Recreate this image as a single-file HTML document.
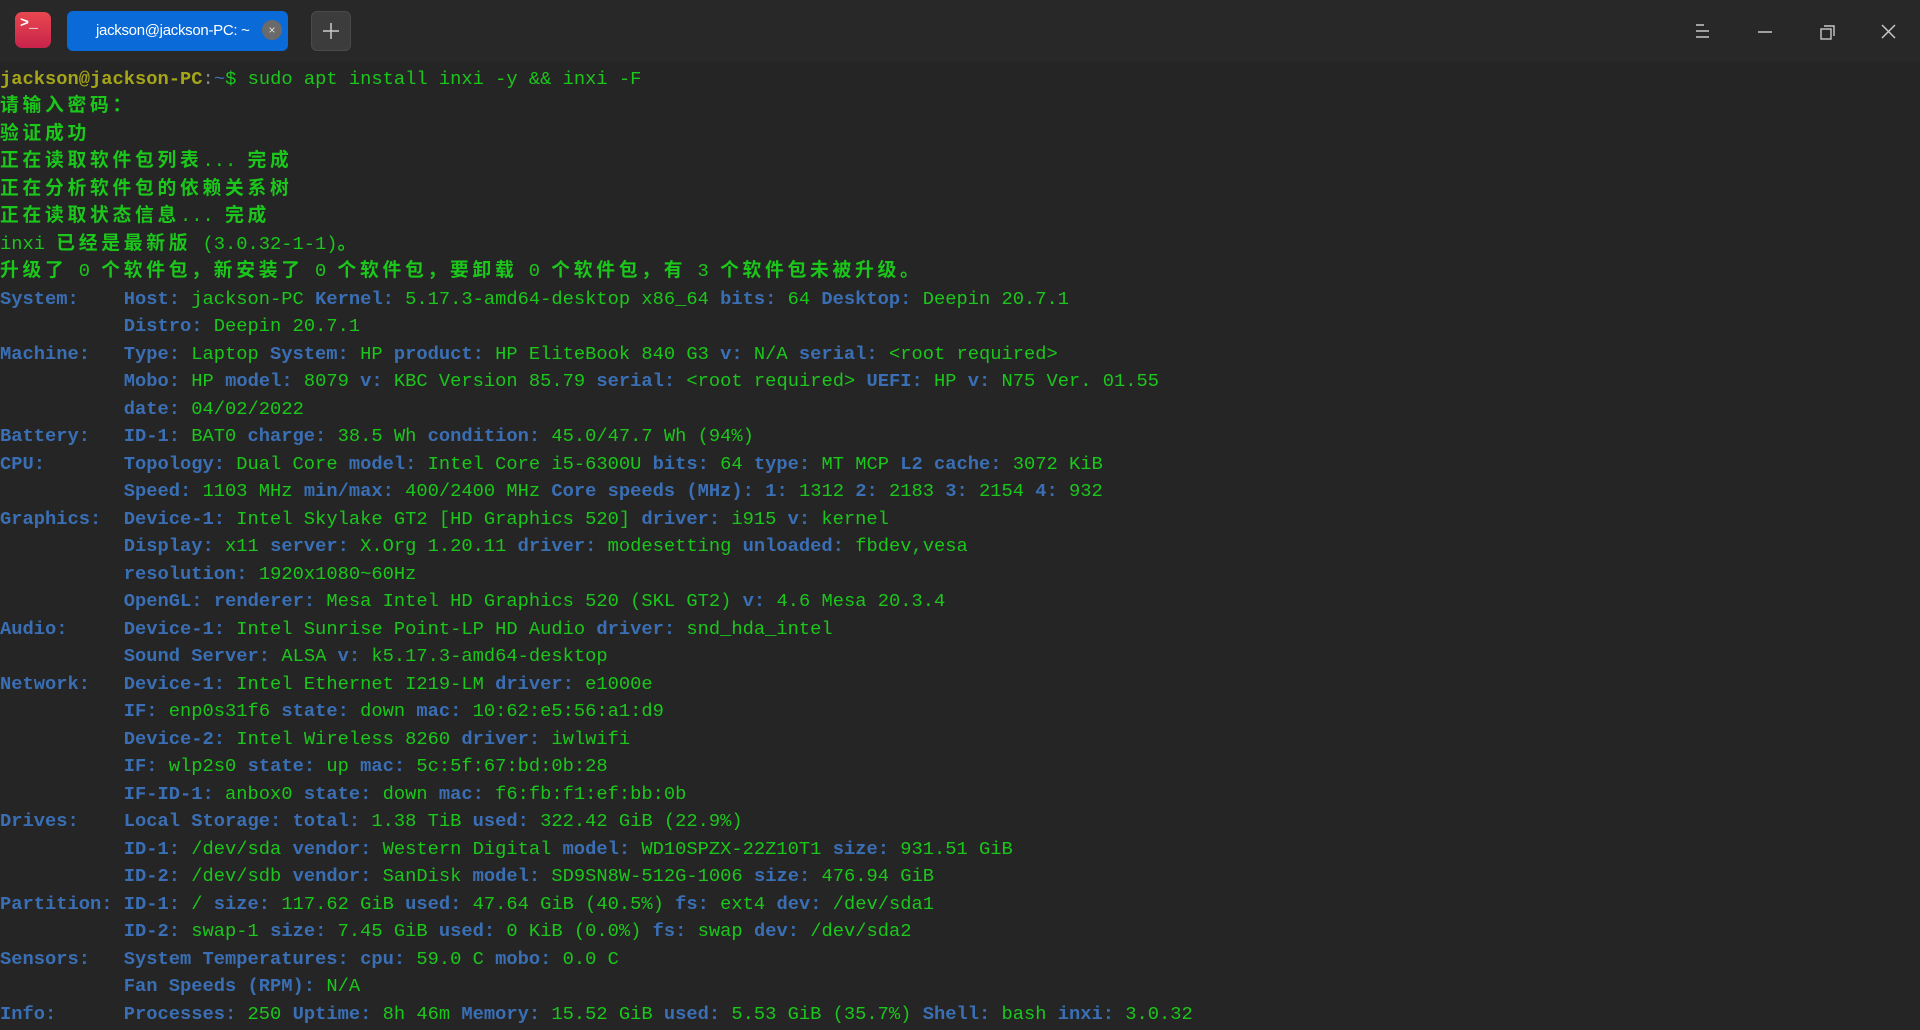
<!DOCTYPE html>
<html><head><meta charset="utf-8"><style>
html,body{margin:0;padding:0;background:#252525;width:1920px;height:1030px;overflow:hidden}
#tb{position:absolute;left:0;top:0;width:1920px;height:62px;background:#282828}
#icon{position:absolute;left:15px;top:12px;width:36px;height:36px;border-radius:7px;background:linear-gradient(#e8484e,#c8234c)}
#icon span{position:absolute;left:5px;top:3px;color:#fff;font:bold 15px "Liberation Mono",monospace}
#tab{position:absolute;left:67px;top:11px;width:221px;height:40px;border-radius:6px;background:#0a6ad8;color:#fff;font:15px "Liberation Sans",sans-serif;line-height:40px}
#tab .t{position:absolute;left:29px;letter-spacing:-0.3px}
#tab .x{position:absolute;left:195px;top:9px;width:20px;height:20px;border-radius:50%;background:#6a6a6a;color:#ddd;font-size:12px;line-height:20px;text-align:center}
#plus{position:absolute;left:311px;top:11px;width:38px;height:38px;border-radius:6px;background:#3c3c3c;border:1px solid #4a4a4a}
pre{position:absolute;left:0;top:65.5px;margin:0;font:18.75px "Liberation Mono","Noto Sans CJK SC",monospace;line-height:27.5px;color:#1bc71b}
.b{color:#3a6fb5;font-weight:bold}
.y{color:#a5a51a;font-weight:bold}
.c{letter-spacing:3.75px;font-weight:bold}
</style></head><body>
<div id="tb">
<div id="icon"><span>&gt;_</span></div>
<div id="tab"><span class="t">jackson@jackson-PC: ~</span><span class="x">×</span></div>
<div id="plus"><svg width="38" height="38"><path d="M19 11v16M11 19h16" stroke="#ccc" stroke-width="1.5"/></svg></div>
<svg style="position:absolute;left:1690px;top:20px" width="220" height="24">
<path d="M6 5h8M6 11h13M6 17h13" stroke="#c8c8c8" stroke-width="1.5"/>
<path d="M68 12h14" stroke="#c8c8c8" stroke-width="1.5"/>
<rect x="131" y="9" width="10" height="10" fill="none" stroke="#c8c8c8" stroke-width="1.4"/>
<path d="M134 6h10v10" fill="none" stroke="#c8c8c8" stroke-width="1.4"/>
<path d="M192 5l13 13M205 5l-13 13" stroke="#c8c8c8" stroke-width="1.5"/>
</svg>
</div>
<pre><span class="y">jackson@jackson-PC</span><span style="color:#888">:</span><span style="color:#3a6fb5">~</span>$ sudo apt install inxi -y &amp;&amp; inxi -F
<span class="c">请输入密码：</span>
<span class="c">验证成功</span>
<span class="c">正在读取软件包列表</span>... <span class="c">完成</span>
<span class="c">正在分析软件包的依赖关系树</span>
<span class="c">正在读取状态信息</span>... <span class="c">完成</span>
inxi <span class="c">已经是最新版</span> (3.0.32-1-1)<span class="c">。</span>
<span class="c">升级了</span> 0 <span class="c">个软件包，新安装了</span> 0 <span class="c">个软件包，要卸载</span> 0 <span class="c">个软件包，有</span> 3 <span class="c">个软件包未被升级。</span>
<span class="b">System:    Host:</span> jackson-PC <span class="b">Kernel:</span> 5.17.3-amd64-desktop x86_64 <span class="b">bits:</span> 64 <span class="b">Desktop:</span> Deepin 20.7.1
           <span class="b">Distro:</span> Deepin 20.7.1
<span class="b">Machine:   Type:</span> Laptop <span class="b">System:</span> HP <span class="b">product:</span> HP EliteBook 840 G3 <span class="b">v:</span> N/A <span class="b">serial:</span> &lt;root required&gt;
           <span class="b">Mobo:</span> HP <span class="b">model:</span> 8079 <span class="b">v:</span> KBC Version 85.79 <span class="b">serial:</span> &lt;root required&gt; <span class="b">UEFI:</span> HP <span class="b">v:</span> N75 Ver. 01.55
           <span class="b">date:</span> 04/02/2022
<span class="b">Battery:   ID-1:</span> BAT0 <span class="b">charge:</span> 38.5 Wh <span class="b">condition:</span> 45.0/47.7 Wh (94%)
<span class="b">CPU:       Topology:</span> Dual Core <span class="b">model:</span> Intel Core i5-6300U <span class="b">bits:</span> 64 <span class="b">type:</span> MT MCP <span class="b">L2 cache:</span> 3072 KiB
           <span class="b">Speed:</span> 1103 MHz <span class="b">min/max:</span> 400/2400 MHz <span class="b">Core speeds (MHz):</span> <span class="b">1:</span> 1312 <span class="b">2:</span> 2183 <span class="b">3:</span> 2154 <span class="b">4:</span> 932
<span class="b">Graphics:  Device-1:</span> Intel Skylake GT2 [HD Graphics 520] <span class="b">driver:</span> i915 <span class="b">v:</span> kernel
           <span class="b">Display:</span> x11 <span class="b">server:</span> X.Org 1.20.11 <span class="b">driver:</span> modesetting <span class="b">unloaded:</span> fbdev,vesa
           <span class="b">resolution:</span> 1920x1080~60Hz
           <span class="b">OpenGL:</span> <span class="b">renderer:</span> Mesa Intel HD Graphics 520 (SKL GT2) <span class="b">v:</span> 4.6 Mesa 20.3.4
<span class="b">Audio:     Device-1:</span> Intel Sunrise Point-LP HD Audio <span class="b">driver:</span> snd_hda_intel
           <span class="b">Sound Server:</span> ALSA <span class="b">v:</span> k5.17.3-amd64-desktop
<span class="b">Network:   Device-1:</span> Intel Ethernet I219-LM <span class="b">driver:</span> e1000e
           <span class="b">IF:</span> enp0s31f6 <span class="b">state:</span> down <span class="b">mac:</span> 10:62:e5:56:a1:d9
           <span class="b">Device-2:</span> Intel Wireless 8260 <span class="b">driver:</span> iwlwifi
           <span class="b">IF:</span> wlp2s0 <span class="b">state:</span> up <span class="b">mac:</span> 5c:5f:67:bd:0b:28
           <span class="b">IF-ID-1:</span> anbox0 <span class="b">state:</span> down <span class="b">mac:</span> f6:fb:f1:ef:bb:0b
<span class="b">Drives:    Local Storage:</span> <span class="b">total:</span> 1.38 TiB <span class="b">used:</span> 322.42 GiB (22.9%)
           <span class="b">ID-1:</span> /dev/sda <span class="b">vendor:</span> Western Digital <span class="b">model:</span> WD10SPZX-22Z10T1 <span class="b">size:</span> 931.51 GiB
           <span class="b">ID-2:</span> /dev/sdb <span class="b">vendor:</span> SanDisk <span class="b">model:</span> SD9SN8W-512G-1006 <span class="b">size:</span> 476.94 GiB
<span class="b">Partition: ID-1:</span> / <span class="b">size:</span> 117.62 GiB <span class="b">used:</span> 47.64 GiB (40.5%) <span class="b">fs:</span> ext4 <span class="b">dev:</span> /dev/sda1
           <span class="b">ID-2:</span> swap-1 <span class="b">size:</span> 7.45 GiB <span class="b">used:</span> 0 KiB (0.0%) <span class="b">fs:</span> swap <span class="b">dev:</span> /dev/sda2
<span class="b">Sensors:   System Temperatures:</span> <span class="b">cpu:</span> 59.0 C <span class="b">mobo:</span> 0.0 C
           <span class="b">Fan Speeds (RPM):</span> N/A
<span class="b">Info:      Processes:</span> 250 <span class="b">Uptime:</span> 8h 46m <span class="b">Memory:</span> 15.52 GiB <span class="b">used:</span> 5.53 GiB (35.7%) <span class="b">Shell:</span> bash <span class="b">inxi:</span> 3.0.32</pre>
</body></html>
